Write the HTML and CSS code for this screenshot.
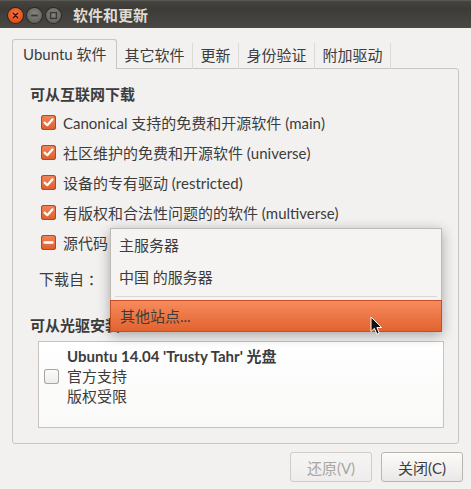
FILE: index.html
```html
<!DOCTYPE html>
<html lang="zh-CN">
<head>
<meta charset="utf-8">
<title>软件和更新</title>
<link rel="stylesheet" href="styles.css">
</head>
<body>
<div class="window">
  <header class="titlebar">
    <div class="wm-buttons">
      <span class="wm close"><svg viewBox="0 0 15 15" width="15" height="15"><path d="M5.3 5.3 L9.7 9.7 M9.7 5.3 L5.3 9.7" stroke="#3a1608" stroke-width="1.4" stroke-linecap="round"/></svg></span>
      <span class="wm min"><svg viewBox="0 0 15 15" width="15" height="15"><path d="M4.2 7.5 H10.8" stroke="#3a3935" stroke-width="1.8"/></svg></span>
      <span class="wm max"><svg viewBox="0 0 15 15" width="15" height="15"><rect x="4.6" y="4.6" width="5.8" height="5.8" fill="none" stroke="#3a3935" stroke-width="1.4"/></svg></span>
    </div>
    <div class="title">软件和更新</div>
  </header>

  <div class="content">
    <nav class="tabs">
      <div class="tab active">Ubuntu 软件</div>
      <div class="tab">其它软件</div>
      <div class="tab">更新</div>
      <div class="tab">身份验证</div>
      <div class="tab">附加驱动</div>
    </nav>

    <section class="panel">
      <h2 class="heading">可从互联网下载</h2>
      <ul class="checks">
        <li class="check-row"><span class="cb checked"><svg viewBox="0 0 15 15" width="15" height="15"><path d="M3.6 7.6 L6.3 10.2 L11.4 4.4" fill="none" stroke="#fff" stroke-width="2.2" stroke-linecap="round" stroke-linejoin="round"/></svg></span>Canonical 支持的免费和开源软件 (main)</li>
        <li class="check-row"><span class="cb checked"><svg viewBox="0 0 15 15" width="15" height="15"><path d="M3.6 7.6 L6.3 10.2 L11.4 4.4" fill="none" stroke="#fff" stroke-width="2.2" stroke-linecap="round" stroke-linejoin="round"/></svg></span>社区维护的免费和开源软件 (universe)</li>
        <li class="check-row"><span class="cb checked"><svg viewBox="0 0 15 15" width="15" height="15"><path d="M3.6 7.6 L6.3 10.2 L11.4 4.4" fill="none" stroke="#fff" stroke-width="2.2" stroke-linecap="round" stroke-linejoin="round"/></svg></span>设备的专有驱动 (restricted)</li>
        <li class="check-row"><span class="cb checked"><svg viewBox="0 0 15 15" width="15" height="15"><path d="M3.6 7.6 L6.3 10.2 L11.4 4.4" fill="none" stroke="#fff" stroke-width="2.2" stroke-linecap="round" stroke-linejoin="round"/></svg></span>有版权和合法性问题的的软件 (multiverse)</li>
        <li class="check-row"><span class="cb checked"><svg viewBox="0 0 15 15" width="15" height="15"><path d="M3.6 7.5 H11.4" fill="none" stroke="#fff" stroke-width="2.4" stroke-linecap="round"/></svg></span>源代码</li>
      </ul>
      <div class="download-row">下载自 ：</div>

      <h2 class="heading cd-heading">可从光驱安装</h2>
      <div class="cd-box">
        <span class="cb empty"></span>
        <div class="cd-text">
          <div class="cd-title">Ubuntu 14.04 'Trusty Tahr' 光盘</div>
          <div>官方支持</div>
          <div>版权受限</div>
        </div>
      </div>

      <div class="popup">
        <div class="menu-item">主服务器</div>
        <div class="menu-item">中国 的服务器</div>
        <div class="menu-sep"></div>
        <div class="menu-item selected">其他站点...</div>
      </div>
    </section>
  </div>

  <footer class="actions">
    <button class="btn" disabled>还原(V)</button>
    <button class="btn">关闭(C)</button>
  </footer>

  <svg class="cursor" viewBox="0 0 13 20" width="13" height="20"><path d="M1 1 L1 15.5 L4.4 12.3 L6.9 18.2 L9.3 17.2 L6.9 11.5 L11.6 11.5 Z" fill="#111" stroke="#fff" stroke-width="1" stroke-linejoin="round"/></svg>
</div>
</body>
</html>
```

FILE: styles.css
```css
* { box-sizing: border-box; }

html, body {
  margin: 0;
  padding: 0;
}

body {
  width: 471px;
  height: 489px;
  overflow: hidden;
  background: #f2f1f0;
  font-family: Lato, "Noto Sans CJK SC", sans-serif;
  font-size: 15px;
  color: #3c3c3c;
}

.window {
  position: relative;
  width: 471px;
  height: 489px;
  background: #f2f1f0;
}

/* title bar */
.titlebar {
  height: 28px;
  display: flex;
  align-items: center;
  background: linear-gradient(#45443f, #3c3b37 30%, #4a4843);
  border-top: 1px solid #5a5853;
}

.wm-buttons {
  display: flex;
  gap: 4px;
  padding-left: 8px;
  margin-top: 1px;
}

.wm {
  width: 15px;
  height: 15px;
  border-radius: 50%;
  display: block;
  box-shadow: 0 0 0 1px rgba(0, 0, 0, 0.35);
}

.wm svg { display: block; }

.close {
  background: radial-gradient(circle at 50% 40%, #f67a4b, #e8521f 60%, #c9421a);
}

.min, .max {
  background: radial-gradient(circle at 50% 40%, #87867f, #6a6964 60%, #55544f);
}

.title {
  margin-left: 12px;
  color: #dfdbd2;
  font-weight: bold;
  font-size: 15px;
  line-height: 20px;
}

/* content */
.content {
  padding: 12px 12px 0 12px;
}

.tabs {
  display: flex;
  align-items: flex-end;
  height: 29px;
  position: relative;
  z-index: 1;
  margin-bottom: -1px;
}

.tab {
  height: 26px;
  line-height: 24px;
  padding: 0 7px 0 8px;
  border-right: 1px solid #dcdad5;
  white-space: nowrap;
}

.tab.active {
  height: 30px;
  line-height: 28px;
  padding: 0 9px 0 10px;
  border: 1px solid #c9c6c1;
  border-bottom: none;
  border-radius: 3px 3px 0 0;
  background: #f2f1f0;
}

.panel {
  position: relative;
  height: 376px;
  border: 1px solid #c9c6c1;
  border-radius: 0 3px 3px 3px;
  background: #f2f1f0;
  padding: 15px 14px 0 17px;
}

.heading {
  margin: 0;
  font-size: 15px;
  font-weight: bold;
  line-height: 20px;
}

.checks {
  list-style: none;
  margin: 3px 0 0 0;
  padding: 0 0 0 11px;
}

.check-row {
  height: 30px;
  display: flex;
  align-items: center;
  white-space: nowrap;
}

.cb {
  width: 15px;
  height: 15px;
  border-radius: 3px;
  flex: none;
  display: block;
}

.cb svg { display: block; }

.check-row .cb {
  margin-right: 7px;
}

.cb.checked {
  background: linear-gradient(#f2875a, #de5d2b);
  box-shadow: inset 0 0 0 1px #b24a1e;
}

.cb.empty {
  background: linear-gradient(#fdfdfc, #ecebe9);
  box-shadow: inset 0 0 0 1px #a9a69f;
}

.download-row {
  height: 30px;
  line-height: 30px;
  margin-top: 7px;
  padding-left: 9px;
}

.cd-heading {
  margin-top: 21px;
}

.cd-box {
  margin: 6px 0 0 8px;
  height: 87px;
  border: 1px solid #c6c3be;
  background: linear-gradient(#ffffff, #f9f9f8);
  display: flex;
  align-items: flex-start;
  padding: 4px 0 0 5px;
}

.cd-box .cb {
  margin-top: 23px;
  margin-right: 8px;
}

.cd-text {
  line-height: 20px;
}

.cd-title {
  font-weight: bold;
}

/* popup menu */
.popup {
  position: absolute;
  left: 97px;
  top: 159px;
  width: 332px;
  background: #f5f4f2;
  border: 1px solid #bdbab4;
  border-bottom: none;
  box-shadow: 0 3px 12px rgba(0, 0, 0, 0.32);
  z-index: 5;
}

.menu-item {
  height: 32px;
  line-height: 32px;
  padding-left: 8px;
}

.menu-sep {
  height: 1px;
  margin: 3px 4px;
  background: #d9d7d3;
}

.menu-item.selected {
  margin: 0 -1px;
  padding-left: 9px;
  line-height: 31px;
  background: linear-gradient(#f78b5d, #e2632f);
  border: 1px solid #c25026;
}

/* footer */
.actions {
  display: flex;
  justify-content: flex-end;
  gap: 9px;
  padding: 8px 8px 0 0;
}

.btn {
  width: 82px;
  height: 30px;
  font-family: Lato, "Noto Sans CJK SC", sans-serif;
  font-size: 15px;
  color: #3c3c3c;
  border: 1px solid #b9b6b0;
  border-radius: 3px;
  background: linear-gradient(#fbfbfa, #e9e8e6);
  padding: 0;
}

.btn:disabled {
  color: #a9a7a2;
  border-color: #cfcdc8;
  background: linear-gradient(#f6f5f4, #eeedeb);
}

.cursor {
  position: absolute;
  left: 370px;
  top: 316px;
  z-index: 10;
}
```
